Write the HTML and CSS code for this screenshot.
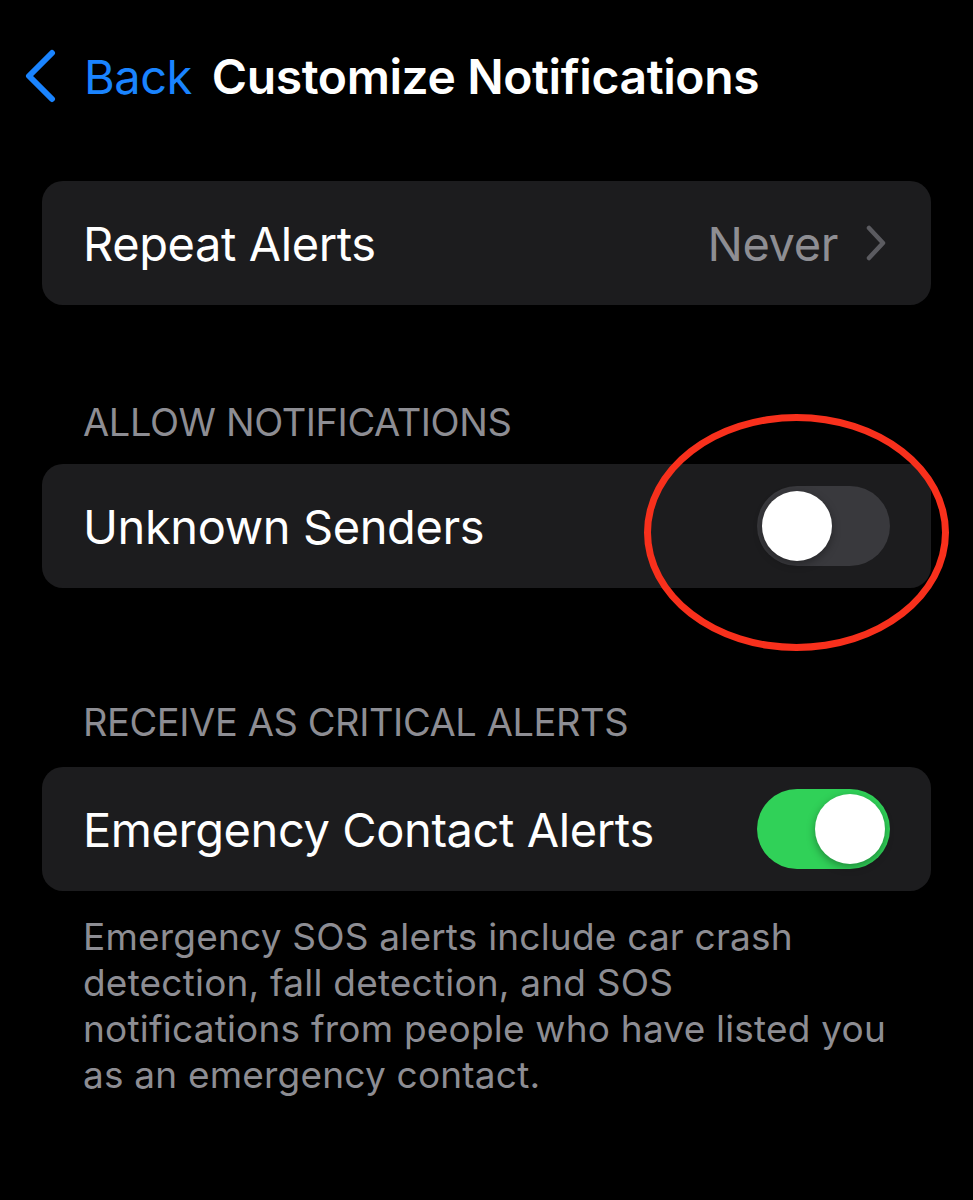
FILE: index.html
```html
<!DOCTYPE html>
<html lang="en">
<head>
<meta charset="utf-8">
<title>Customize Notifications</title>
<link rel="stylesheet" href="styles.css">
</head>
<body>
<div class="screen">
  <header class="nav">
    <a class="back" href="#">
      <svg class="back-chevron" width="34" height="54" viewBox="0 0 34 54" aria-hidden="true">
        <path d="M29 4 L6 27 L29 50" fill="none" stroke="#1a84ff" stroke-width="6" stroke-linecap="round" stroke-linejoin="round"/>
      </svg>
      <span class="back-label">Back</span>
    </a>
    <h1 class="nav-title">Customize Notifications</h1>
  </header>

  <section class="group group-first">
    <div class="row">
      <span class="row-label">Repeat Alerts</span>
      <span class="row-value">Never</span>
      <svg class="disclosure" width="22" height="36" viewBox="0 0 22 36" aria-hidden="true">
        <path d="M4 3 L18 18 L4 33" fill="none" stroke="#5b5b60" stroke-width="4.5" stroke-linecap="round" stroke-linejoin="round"/>
      </svg>
    </div>
  </section>

  <h2 class="group-header header-allow">ALLOW NOTIFICATIONS</h2>
  <section class="group">
    <div class="row">
      <span class="row-label">Unknown Senders</span>
      <span class="switch"><span class="knob"></span></span>
      <span class="highlight-ring" aria-hidden="true"></span>
    </div>
  </section>

  <h2 class="group-header header-critical">RECEIVE AS CRITICAL ALERTS</h2>
  <section class="group">
    <div class="row">
      <span class="row-label">Emergency Contact Alerts</span>
      <span class="switch switch-on"><span class="knob"></span></span>
    </div>
  </section>

  <p class="group-footer">Emergency SOS alerts include car crash detection, fall detection, and SOS notifications from people who have listed you as an emergency contact.</p>
</div>
</body>
</html>
```

FILE: styles.css
```css
html, body {
  margin: 0;
  padding: 0;
  background: #000;
}

body {
  font-family: Inter, "Noto Sans", "Liberation Sans", sans-serif;
  color: #fff;
  -webkit-font-smoothing: antialiased;
}

.screen {
  width: 973px;
  min-height: 1200px;
  background: #000;
}

/* navigation bar */
.nav {
  display: flex;
  align-items: center;
  height: 76px;
  margin-top: 38px;
  padding-left: 23px;
}

.back {
  display: flex;
  align-items: center;
  text-decoration: none;
  color: #1a84ff;
}

.back-chevron {
  display: block;
  flex: none;
}

.back-label {
  margin-left: 27px;
  font-size: 47px;
  font-weight: 400;
  letter-spacing: -0.5px;
}

.nav-title {
  margin: 0 0 0 20px;
  font-size: 48px;
  font-weight: 600;
  letter-spacing: -0.4px;
  color: #fff;
}

/* grouped list */
.group {
  margin: 0 42px;
  background: #1c1c1e;
  border-radius: 21px;
}

.group-first {
  margin-top: 67px;
}

.row {
  position: relative;
  display: flex;
  align-items: center;
  height: 124px;
  padding: 0 41px 0 41px;
}

.row-label {
  flex: 1;
  font-size: 47px;
  letter-spacing: -0.4px;
  color: #fff;
}

.row-value {
  font-size: 47px;
  letter-spacing: -0.4px;
  color: #8e8e93;
}

.disclosure {
  display: block;
  margin-left: 27px;
  margin-right: 3px;
}

.group-header {
  margin: 0;
  padding: 0 41px;
  margin-left: 42px;
  font-size: 38px;
  line-height: 48px;
  font-weight: 400;
  letter-spacing: -0.4px;
  color: #8d8d93;
}

.header-allow {
  margin-top: 93px;
  margin-bottom: 18px;
}

.header-critical {
  margin-top: 110px;
  margin-bottom: 21px;
}

/* switches */
.switch {
  position: relative;
  display: block;
  width: 133px;
  height: 80px;
  border-radius: 40px;
  background: #39393d;
  flex: none;
}

.switch .knob {
  position: absolute;
  top: 5px;
  left: 5px;
  width: 70px;
  height: 70px;
  border-radius: 50%;
  background: #fff;
  box-shadow: 0 3px 8px rgba(0, 0, 0, 0.35);
}

.switch-on {
  background: #30d158;
}

.switch-on .knob {
  left: auto;
  right: 5px;
}

/* red annotation ring drawn over the first switch */
.highlight-ring {
  position: absolute;
  left: 602px;
  top: -50px;
  width: 291px;
  height: 223px;
  border: 7px solid #f8301c;
  border-radius: 50%;
  pointer-events: none;
}

.group-footer {
  margin: 23px 42px 0;
  padding: 0 41px;
  font-size: 37px;
  line-height: 46px;
  color: #8d8d93;
  letter-spacing: 0.2px;
}
```
